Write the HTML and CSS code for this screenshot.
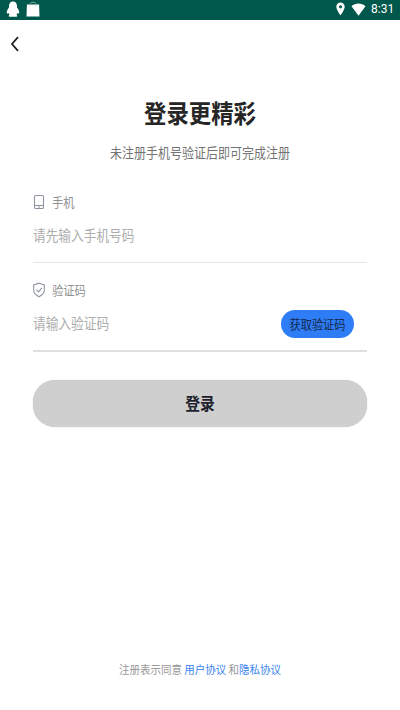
FILE: index.html
```
<!DOCTYPE html>
<html lang="zh-CN">
<head>
<meta charset="utf-8">
<title>登录</title>
<link rel="stylesheet" href="styles.css">
</head>
<body>
<header class="status">
  <svg class="qq" width="14" height="16" viewBox="0 0 14 16"><path fill="#fff" d="M7 .5C4.500.5 3 2.400 3 4.900v1.600C1.600 8.300.6 10.200.8 11.900c.1.900 1 .9 1.800.1.200.9.500 1.300 1 1.800-1.200.5-1.300 1.900.2 1.900h6.400c1.500 0 1.400-1.400.2-1.900.5-.5.8-.9 1-1.800.8.800 1.700.8 1.800-.1.200-1.700-.8-3.600-2.200-5.400V4.900C11 2.400 9.500.5 7 .5Z"/></svg>
  <svg class="bag" width="14" height="16" viewBox="0 0 14 16"><path fill="#fff" d="M.9 3.500h12.200l.4 12H.5Z"/><path fill="none" stroke="#8fb5ab" stroke-width=".9" d="M4 4.500V3.300C4 .6 10 .6 10 3.300v1.200"/></svg>
  <div class="status-right">
    <svg class="pin" width="9" height="14" viewBox="0 0 9 14"><path fill="#fff" fill-rule="evenodd" d="M4.500.5C2.200.5.3 2.300.3 4.700c0 3 4.200 8.600 4.200 8.600s4.200-5.600 4.200-8.600C8.700 2.300 6.800.5 4.500.5Zm0 2.700a1.500 1.600 0 1 1 0 3.200 1.500 1.600 0 0 1 0-3.200Z"/></svg>
    <svg class="wifi" width="15" height="13" viewBox="0 0 15 13"><path fill="#fff" d="M.5 3.200C4.500-.3 10.500-.3 14.500 3.200L7.500 12.700Z"/></svg>
    <span class="time">8:31</span>
  </div>
</header>
<nav class="nav">
  <svg width="9" height="16" viewBox="0 0 9 16"><path fill="none" stroke="#222" stroke-width="1.800" d="M8 1.200 2 8l6 6.800"/></svg>
</nav>
<main class="main">
  <h1 class="title tall">登录更精彩</h1>
  <p class="subtitle tall">未注册手机号验证后即可完成注册</p>
  <section class="field">
    <div class="label">
      <svg width="12" height="16" viewBox="0 0 12 16"><g fill="none" stroke="#8f95a0" stroke-width="1.100"><rect x="1.500" y="1.500" width="9" height="13" rx="1.300"/><path d="M1.500 11.500h9"/></g><path stroke="#8f95a0" d="M5 13h2"/></svg>
      <span class="tall">手机</span>
    </div>
    <div class="entry"><span class="placeholder tall">请先输入手机号码</span></div>
  </section>
  <section class="field code">
    <div class="label">
      <svg width="12" height="16" viewBox="0 0 12 16"><g fill="none" stroke="#8f95a0" stroke-width="1.100"><path d="M6 1.200 11.300 3v5.500c0 2.800-2.500 4.700-5.300 6.200C3.200 13.200.7 11.300.7 8.500V3Z"/><path d="m3.500 7.600 2 2.200 3.400-4"/></g></svg>
      <span class="tall">验证码</span>
    </div>
    <div class="entry">
      <span class="placeholder tall">请输入验证码</span>
      <button class="send"><span class="tall">获取验证码</span></button>
    </div>
  </section>
  <button class="login"><span class="tall">登录</span></button>
</main>
<footer class="footer"><p class="tall">注册表示同意 <a>用户协议</a> 和<a>隐私协议</a></p></footer>
</body>
</html>
```
FILE: styles.css
```
* { box-sizing: border-box; }
body {
  margin: 0;
  height: 710px;
  display: flex;
  flex-direction: column;
  background: #fff;
  font-family: "Noto Sans CJK SC", sans-serif;
  overflow: hidden;
}
h1, p { margin: 0; }
svg { display: block; flex: none; }
button { border: 0; padding: 0; font-family: inherit; }
/* Glyphs are taller than they are wide throughout the screen. */
.tall { display: block; transform: translateY(-1px) scaleY(1.13); white-space: nowrap; }
.status {
  height: 20px;
  flex: none;
  display: flex;
  align-items: center;
  padding: 0 5px 2px 6px;
  background: #00574b;
}
.bag { margin-left: 6px; }
.status-right { margin-left: auto; display: flex; align-items: center; }
.wifi { margin-left: 6px; }
.time {
  width: 24px;
  margin-left: 5px;
  color: #fff;
  font: 400 12px/18px Roboto, sans-serif;
  transform: scaleY(1.1);
}
.nav { height: 48px; flex: none; padding: 16px 0 0 10px; }
.main { flex: 1; padding: 0 33px; }
.title {
  margin-top: 28px;
  text-align: center;
  font-size: 22.400px;
  line-height: 34px;
  font-weight: 700;
  color: #262626;
}
.subtitle {
  margin-top: 13px;
  text-align: center;
  font-size: 12px;
  line-height: 20px;
  color: #737373;
}
.field { margin-top: 29px; height: 71px; border-bottom: 1px solid #e6e6e6; }
.code { margin-top: 17px; height: 72px; border-bottom: 2px solid #e0e0e0; }
.label {
  display: flex;
  align-items: center;
  gap: 7px;
  height: 20px;
  font-size: 11.300px;
  line-height: 20px;
  color: #929292;
}
.entry { display: flex; align-items: center; justify-content: space-between; height: 28px; }
.field .entry { margin-top: 10px; }
.placeholder { font-size: 12.700px; line-height: 28px; color: #adadad; }
.send {
  width: 73px;
  height: 28px;
  margin-right: 13px;
  border-radius: 14px;
  background: #2e7df6;
  color: #14294e;
  font-size: 11.200px;
  line-height: 28px;
  text-align: center;
}
.login {
  display: block;
  width: 334px;
  height: 47px;
  margin-top: 28px;
  border-radius: 22px;
  background: #cfcfcf;
  box-shadow: 0 0 1px #bbb;
  color: #1d222c;
  font-size: 14.800px;
  line-height: 46px;
  font-weight: 700;
}
.footer {
  height: 50px;
  flex: none;
  text-align: center;
  font-size: 10.500px;
  line-height: 20px;
  color: #999;
}
.footer a { color: #3a83f0; }
```
